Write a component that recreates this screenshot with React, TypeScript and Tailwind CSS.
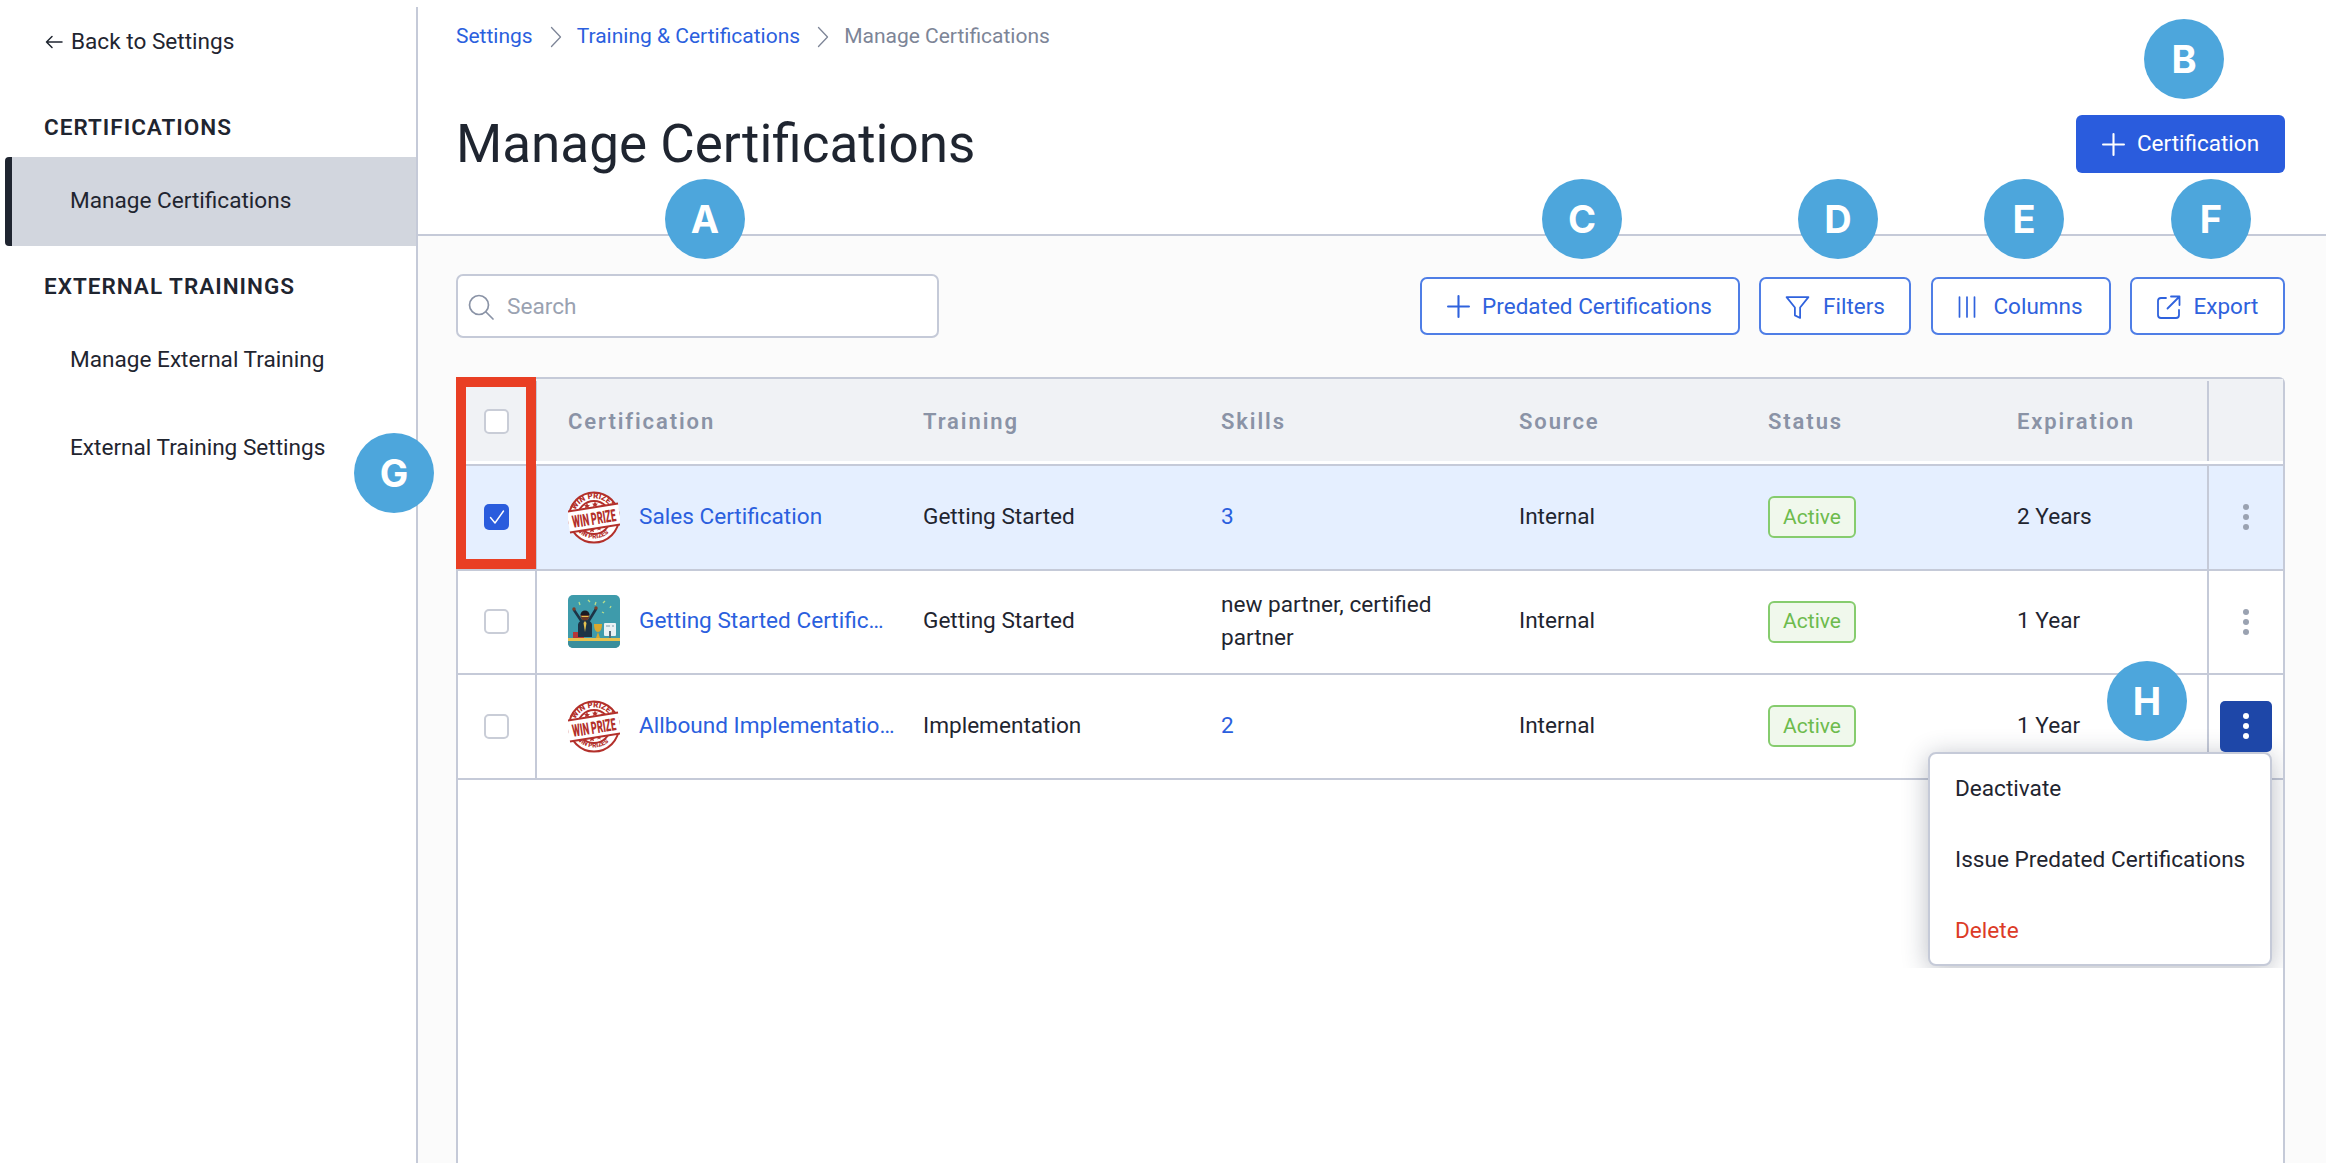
import React from "react";

const font = "font-['Roboto',sans-serif]";

function Callout({ letter, className }: { letter: string; className: string }) {
  return (
    <div className={`absolute z-30 flex h-20 w-20 items-center justify-center rounded-full bg-[#4da6dc] font-['Inter',sans-serif] text-[38px] font-bold leading-none text-white ${className}`}>
      {letter}
    </div>
  );
}

function PlusIcon({ className }: { className?: string }) {
  return (
    <svg viewBox="0 0 22 22" className={className} fill="none" stroke="currentColor" strokeWidth="2" strokeLinecap="round">
      <path d="M11 1v20M1 11h20" />
    </svg>
  );
}

function OutlineButton({ children, className }: { children: React.ReactNode; className: string }) {
  return (
    <button className={`flex h-[58px] items-center justify-center rounded-[7px] border-2 border-[#4f7ee6] bg-white pt-[1px] text-[22.5px] text-[#2f62dd] ${className}`}>
      {children}
    </button>
  );
}

function Stamp() {
  const red = "#b3302b";
  return (
    <svg viewBox="0 0 52 53" className="h-[53px] w-[52px] shrink-0">
      <defs>
        <path id="arcTop" d="M6 22A21 21 0 0 1 46 22" />
        <path id="arcBot" d="M7 37A22.500 22.500 0 0 0 45 37" />
      </defs>
      <circle cx="26" cy="26.500" r="25" fill="#fff" stroke={red} strokeWidth="2" />
      <circle cx="26" cy="26.500" r="16.500" fill="none" stroke={red} strokeWidth="2" />
      <text fontFamily="Roboto" fontWeight="900" fontSize="8" fill={red}>
        <textPath href="#arcTop" startOffset="6%">WIN PRIZES</textPath>
      </text>
      <text fontFamily="Roboto" fontWeight="900" fontSize="6.500" fill={red}>
        <textPath href="#arcBot" startOffset="6%">WIN PRIZES</textPath>
      </text>
      <path d="M19 12l1 2 2 .3-1.500 1.200.5 2-2-1-2 1 .5-2L16 14.300l2-.3zM27 10.500l1 2 2 .3-1.500 1.200.5 2-2-1-2 1 .5-2-1.500-1.200 2-.3zM34 13l.8 1.800 2 .3-1.400 1.200.4 1.900-1.800-1-1.800 1 .4-1.900-1.400-1.200 2-.3z" fill={red} />
      <path d="M24 36l1 1.800 2 .3-1.500 1.200.5 2-2-1-2 1 .5-2-1.500-1.200 2-.3zM31 35l.8 1.500 1.700.3-1.300 1 .4 1.600-1.600-.8-1.600.8.4-1.600-1.300-1 1.700-.3z" fill={red} />
      <g transform="rotate(-9 26 27)">
        <rect x="0" y="16.500" width="52" height="21" fill="#fff" />
        <path d="M0 16.500h52M0 37.500h52" stroke={red} strokeWidth="2" />
        <text x="26" y="33.500" textAnchor="middle" fontFamily="Roboto" fontWeight="900" fontSize="17" textLength="44" lengthAdjust="spacingAndGlyphs" fill={red}>WIN PRIZE</text>
      </g>
    </svg>
  );
}

function Winner() {
  return (
    <svg viewBox="0 0 52 53" className="h-[53px] w-[52px] shrink-0 rounded-[5px]">
      <rect width="52" height="53" fill="#3e9bab" />
      <rect y="43" width="52" height="3" fill="#e5c14f" />
      <rect y="46" width="52" height="7" fill="#3a8e9c" />
      <rect x="5" y="37" width="11" height="6" fill="#b53636" />
      <path d="M10 42V30c0-3 3-5 7-5s7 2 7 5v12z" fill="#1d3446" />
      <path d="M14 27L6 15M20 27l8-13" stroke="#1d3446" strokeWidth="2.600" strokeLinecap="round" />
      <circle cx="6" cy="14" r="1.700" fill="#7b3f2a" />
      <circle cx="28" cy="13" r="1.700" fill="#7b3f2a" />
      <circle cx="17" cy="21" r="4.500" fill="#6b3826" />
      <path d="M12.500 20a4.500 4.500 0 0 1 9 0z" fill="#1b1b22" />
      <path d="M13.500 21.500h7" stroke="#e5c14f" strokeWidth="1" />
      <path d="M17 26l-1.500 2 1.500 9 1.500-9z" fill="#e5c14f" />
      <path d="M26 29h8c0 5-1.500 8-4 8s-4-3-4-8zM28 43l2-6 2 6z" fill="#d9a82e" />
      <rect x="36" y="28" width="12" height="13" rx="1" fill="#e9f1f4" />
      <rect x="41" y="36" width="2" height="7" fill="#516b7c" />
      <path d="M38 31h4M44 31h2" stroke="#7b9aa8" strokeWidth="1" />
      <path d="M11 7l1 3M20 5l2 2M28 7l-1 3M35 8l2-2M42 13l1-2M34 17l2 1" stroke="#b7dd8c" strokeWidth="1.300" />
    </svg>
  );
}

function Check({ checked }: { checked?: boolean }) {
  return checked ? (
    <span className="flex h-[26px] w-[25px] items-center justify-center rounded-[5px] bg-[#2a5cdd]">
      <svg viewBox="0 0 16 16" className="h-4 w-4" fill="none" stroke="#fff" strokeWidth="1.400" strokeLinecap="round" strokeLinejoin="round">
        <path d="M1.500 8.500L6 14 14.500 2" />
      </svg>
    </span>
  ) : (
    <span className="block h-[25px] w-[25px] rounded-[5px] border-2 border-[#c9cdd7] bg-white" />
  );
}

function Dots({ color }: { color: string }) {
  return (
    <span className="flex flex-col gap-[4px]">
      <span className={`block h-[6px] w-[6px] rounded-full ${color}`} />
      <span className={`block h-[6px] w-[6px] rounded-full ${color}`} />
      <span className={`block h-[6px] w-[6px] rounded-full ${color}`} />
    </span>
  );
}

const cols = "grid grid-cols-[77px_356px_298px_298px_249px_249px_222px_76px]";

type RowData = {
  thumb: React.ReactNode;
  name: string;
  training: string;
  skills: React.ReactNode;
  exp: string;
  rowClass: string;
  checked?: boolean;
  kebab?: boolean;
};

const rows: RowData[] = [
  { thumb: <Stamp />, name: "Sales Certification", training: "Getting Started", skills: <span className="text-[#2b5fde]">3</span>, exp: "2 Years", rowClass: "bg-[#e5efff]", checked: true },
  { thumb: <Winner />, name: "Getting Started Certific…", training: "Getting Started", skills: <span className="block w-[225px] leading-[33px]">new partner, certified partner</span>, exp: "1 Year", rowClass: "bg-white" },
  { thumb: <Stamp />, name: "Allbound Implementatio…", training: "Implementation", skills: <span className="text-[#2b5fde]">2</span>, exp: "1 Year", rowClass: "bg-white", kebab: true },
];

export default function App() {
  return (
    <div className={`relative h-[1168px] w-[2326px] overflow-hidden bg-white text-[22.6px] text-[#1f2530] ${font}`}>
      <div className="flex h-[1163px] pt-[7px]">
        {/* Sidebar */}
        <aside className="w-[418px] shrink-0 border-r-2 border-[#c5cad8] bg-white">
          <div className="mt-[21px] flex h-[28px] items-center gap-[8px] pl-[45px]">
            <svg viewBox="0 0 18 14" className="h-[14px] w-[18px]" fill="none" stroke="#1f2530" strokeWidth="1.500" strokeLinecap="round" strokeLinejoin="round">
              <path d="M17 7H1.500M7 1.500L1.500 7 7 12.500" />
            </svg>
            <span>Back to Settings</span>
          </div>
          <div className="mt-[58px] flex h-[28px] items-center pl-[44px] text-[22.500px] font-semibold tracking-[1px]">CERTIFICATIONS</div>
          <div className="ml-[5px] mt-[15px] flex h-[89px] items-center rounded-l-[4px] border-l-[7px] border-[#1f2530] bg-[#d2d6de] pb-[2px] pl-[58px]">Manage Certifications</div>
          <div className="mt-[27px] flex h-[28px] items-center pl-[44px] text-[22.500px] font-semibold tracking-[1px]">EXTERNAL TRAININGS</div>
          <div className="mt-[15px] flex h-[88px] items-center pl-[70px]">Manage External Training</div>
          <div className="flex h-[87px] items-center pl-[70px]">External Training Settings</div>
        </aside>

        {/* Main */}
        <main className="flex min-w-0 flex-1 flex-col">
          <header className="h-[229px] shrink-0 border-b-2 border-[#c5cad8] bg-white pl-[38px] pr-[41px] pt-[16px]">
            <nav className="flex h-[28px] items-center text-[21px]">
              <span className="text-[#2b5fde]">Settings</span>
              <svg viewBox="0 0 12 22" className="ml-[17px] mr-[15px] h-[22px] w-[12px]" fill="none" stroke="#7d8597" strokeWidth="1.300" strokeLinecap="round" strokeLinejoin="round">
                <path d="M1.500 1.500L10.500 11 1.500 20.500" />
              </svg>
              <span className="text-[#2b5fde]">Training &amp; Certifications</span>
              <svg viewBox="0 0 12 22" className="ml-[17px] mr-[15px] h-[22px] w-[12px]" fill="none" stroke="#7d8597" strokeWidth="1.300" strokeLinecap="round" strokeLinejoin="round">
                <path d="M1.500 1.500L10.500 11 1.500 20.500" />
              </svg>
              <span className="text-[#7d8597]">Manage Certifications</span>
            </nav>
            <div className="mt-[64px] flex h-[58px] items-center justify-between">
              <h1 className="text-[53px] font-normal leading-none">Manage Certifications</h1>
              <button className="flex h-[58px] w-[209px] items-center justify-center gap-[12px] rounded-[6px] bg-[#2a5cdd] text-[22.500px] text-white">
                <PlusIcon className="h-[23px] w-[23px]" />
                Certification
              </button>
            </div>
          </header>

          <section className="flex min-h-0 flex-1 flex-col bg-[#fbfbfb] pl-[38px] pr-[41px] pt-[38px]">
            <div className="flex h-[64px] shrink-0 items-center justify-between">
              <div className="flex h-[64px] w-[483px] items-center gap-[13px] rounded-[7px] border-2 border-[#c5cad8] bg-white pl-[10px] pt-[1px]">
                <svg viewBox="0 0 26 26" className="h-[26px] w-[26px]" fill="none" stroke="#8a93a6" strokeWidth="1.700" strokeLinecap="round">
                  <circle cx="11" cy="11" r="9.500" />
                  <path d="M18 18l7 7" />
                </svg>
                <span className="text-[#9aa2b1]">Search</span>
              </div>
              <div className="flex gap-[19.500px]">
                <OutlineButton className="w-[320px] gap-[12px]">
                  <PlusIcon className="h-[23px] w-[23px]" />
                  Predated Certifications
                </OutlineButton>
                <OutlineButton className="w-[152px] gap-[13px]">
                  <svg viewBox="0 0 24 24" className="h-[26px] w-[25px]" fill="none" stroke="currentColor" strokeWidth="1.700" strokeLinejoin="round">
                    <path d="M1.500 2.500h21L14.500 12.500v10l-5-2.500v-7.500z" />
                  </svg>
                  Filters
                </OutlineButton>
                <OutlineButton className="w-[180px] gap-[17px]">
                  <svg viewBox="0 0 18 22" className="h-[22px] w-[18px]" fill="none" stroke="currentColor" strokeWidth="1.700" strokeLinecap="round">
                    <path d="M1.500 1v20M9 1v20M16.500 1v20" />
                  </svg>
                  Columns
                </OutlineButton>
                <OutlineButton className="w-[155px] gap-[13px]">
                  <svg viewBox="0 0 24 24" className="h-[24px] w-[24px]" fill="none" stroke="currentColor" strokeWidth="1.800" strokeLinecap="round" strokeLinejoin="round">
                    <path d="M9 3H4a3 3 0 0 0-3 3v14a3 3 0 0 0 3 3h15a3 3 0 0 0 3-3v-5M10.500 13.500L22 2M14 1.500h8.500V10" />
                  </svg>
                  Export
                </OutlineButton>
              </div>
            </div>

            {/* Table */}
            <div className="mt-[39px] min-h-0 flex-1 rounded-t-[6px] border-x-2 border-t-2 border-[#c5cad8] bg-white">
              <div className={`${cols} h-[82px] bg-[#f0f2f5] pt-[2px] text-[22px] font-semibold tracking-[1.900px] text-[#8a93a6]`}>
                <div className="flex items-center justify-center pt-[1px]"><Check /></div>
                <div className="flex items-center border-l-2 border-[#c5cad8] pl-[31px]">Certification</div>
                <div className="flex items-center pl-[32px]">Training</div>
                <div className="flex items-center pl-[32px]">Skills</div>
                <div className="flex items-center pl-[32px]">Source</div>
                <div className="flex items-center pl-[32px]">Status</div>
                <div className="flex items-center pl-[32px]">Expiration</div>
                <div className="border-l-2 border-[#c5cad8]" />
              </div>
              <div className="mt-[3px] border-t-2 border-[#c5cad8]">
                {rows.map((r) => (
                  <div key={r.name} className={`${cols} h-[104.500px] border-b-2 border-[#c5cad8] ${r.rowClass}`}>
                    <div className="flex items-center justify-center"><Check checked={r.checked} /></div>
                    <div className="flex items-center gap-[19px] border-l-2 border-[#c5cad8] pl-[31px]">
                      {r.thumb}
                      <span className="whitespace-nowrap pb-[1px] text-[#2b5fde]">{r.name}</span>
                    </div>
                    <div className="flex items-center pb-[1px] pl-[32px]">{r.training}</div>
                    <div className="flex items-center pb-[1px] pl-[32px]">{r.skills}</div>
                    <div className="flex items-center pb-[1px] pl-[32px]">Internal</div>
                    <div className="flex items-center pl-[32px]">
                      <span className="flex h-[42px] w-[88px] items-center justify-center rounded-[6px] border-2 border-[#86cc6e] bg-[#f0f8ec] text-[21px] text-[#6dbb4d]">Active</span>
                    </div>
                    <div className="flex items-center pb-[1px] pl-[32px]">{r.exp}</div>
                    <div className="flex items-center justify-center border-l-2 border-[#c5cad8]">
                      {r.kebab ? (
                        <span className="relative z-20 flex h-[51px] w-[52px] items-center justify-center rounded-[5px] bg-[#1e47a8]"><Dots color="bg-white" /></span>
                      ) : (
                        <Dots color="bg-[#9aa2b1]" />
                      )}
                    </div>
                  </div>
                ))}
              </div>
            </div>
          </section>
        </main>
      </div>

      {/* Dropdown menu: its shadow is cut off at the bottom and at the table's right edge */}
      <div className="absolute left-[1880px] top-[712px] z-10 h-[256px] w-[403px] overflow-hidden">
        <div className="absolute left-[48px] top-[40px] h-[214px] w-[344px] rounded-[8px] border-2 border-[#c5cad8] bg-white pl-[25px] shadow-[0_4px_26px_rgba(40,50,70,0.32)]">
          <div className="flex h-[70px] items-center">Deactivate</div>
          <div className="flex h-[71px] items-center">Issue Predated Certifications</div>
          <div className="flex h-[71px] items-center text-[#dc3b27]">Delete</div>
        </div>
      </div>

      {/* Red highlight box around the checkbox column */}
      <div className="absolute left-[456px] top-[377px] z-20 h-[192px] w-[80px] border-[10px] border-[#e93f24]" />

      <Callout letter="A" className="left-[665px] top-[179px]" />
      <Callout letter="B" className="left-[2144px] top-[19px]" />
      <Callout letter="C" className="left-[1542px] top-[179px]" />
      <Callout letter="D" className="left-[1798px] top-[179px]" />
      <Callout letter="E" className="left-[1984px] top-[179px]" />
      <Callout letter="F" className="left-[2171px] top-[179px]" />
      <Callout letter="G" className="left-[354px] top-[433px]" />
      <Callout letter="H" className="left-[2107px] top-[661px]" />
    </div>
  );
}
